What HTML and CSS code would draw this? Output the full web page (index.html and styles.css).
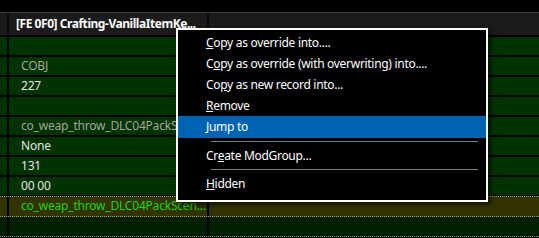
FILE: index.html
```html
<!DOCTYPE html>
<html lang="en">
  <head>
    <meta charset="UTF-8" />
    <title>Records</title>
    <link rel="stylesheet" href="styles.css">
  </head>
  <body>
    <div class="topbar"></div>
    <div class="grid">
      <div class="row head">
        <div class="c0"></div>
        <div class="c1">[FE 0F0] Crafting-VanillaItemKe...</div>
        <div class="c2"></div>
      </div>
      <div class="row green"><div class="c0"></div><div class="c1"></div><div class="c2"></div></div>
      <div class="row green"><div class="c0"></div><div class="c1 dim">COBJ</div><div class="c2"></div></div>
      <div class="row green"><div class="c0"></div><div class="c1">227</div><div class="c2"></div></div>
      <div class="row green"><div class="c0"></div><div class="c1"></div><div class="c2"></div></div>
      <div class="row green"><div class="c0"></div><div class="c1 dim">co_weap_throw_DLC04PackScen...</div><div class="c2"></div></div>
      <div class="row green"><div class="c0"></div><div class="c1">None</div><div class="c2"></div></div>
      <div class="row green"><div class="c0"></div><div class="c1">131</div><div class="c2"></div></div>
      <div class="row green"><div class="c0"></div><div class="c1">00 00</div><div class="c2"></div></div>
      <div class="row olive"><div class="c0"></div><div class="c1 lime">co_weap_throw_DLC04PackScen...</div><div class="c2"></div></div>
      <div class="row dark"><div class="c0"></div><div class="c1"></div><div class="c2"></div></div>
    </div>

    <div class="menu">
      <div class="item"><u>C</u>opy as override into....</div>
      <div class="item">C<u>o</u>py as override (with overwriting) into....</div>
      <div class="item">Co<u>p</u>y as new record into...</div>
      <div class="item"><u>R</u>emove</div>
      <div class="item active"><u>J</u>ump to</div>
      <div class="sep"></div>
      <div class="item">Cr<u>e</u>ate ModGroup...</div>
      <div class="sep"></div>
      <div class="item"><u>H</u>idden</div>
    </div>
  </body>
</html>
```

FILE: styles.css
```css
body {
  margin: 0;
  background-color: #000;
  font-family: "Noto Sans", "Open Sans", sans-serif;
  font-size: 12px;
  color: #e6e6e6;
  overflow: hidden;
  height: 238px;
}

.topbar {
  height: 12px;
  background-color: #000;
  border-bottom: 1px solid #3a3a3a;
}

.row {
  display: flex;
  height: 18px;
  border-bottom: 2px solid #000;
  line-height: 18px;
  letter-spacing: -0.2px;
}

.c0 {
  width: 7px;
  border-right: 2px solid #000;
}

.c1 {
  width: 186px;
  padding-left: 12px;
  border-right: 2px solid #000;
  white-space: nowrap;
}

.c2 {
  flex: 1;
}

.head {
  height: 22px;
  line-height: 22px;
  background-color: #1b1b1b;
  font-weight: bold;
  color: #fff;
  letter-spacing: -0.45px;
}

.head .c0,
.head .c1 {
  border-right-color: #0c0c0c;
}

.head .c1 {
  padding-left: 7px;
  width: 191px;
}

.green {
  background-color: #003300;
}

.dim {
  color: #a3a89a;
}

.olive {
  background-color: #333300;
  border-top: 1px dotted #9a9a9a;
  border-bottom: 1px dotted #9a9a9a;
  height: 19px;
  margin-top: -1px;
}

.lime {
  color: #19d419;
}

.dark {
  background-color: #002100;
  border-bottom: 1px dotted #9a9a9a;
  height: 19px;
}

/* context menu floats over the grid */
.menu {
  position: absolute;
  left: 176px;
  top: 28px;
  width: 308px;
  padding: 2px 0 6px 0;
  background-color: #000;
  border: 2px solid #fff;
  box-shadow: 3px 3px 4px rgba(0, 0, 0, 0.6);
  letter-spacing: -0.3px;
}

.item {
  height: 21px;
  line-height: 21px;
  padding-left: 28px;
  color: #fff;
  white-space: nowrap;
}

.item.active {
  background-color: #0063b1;
  height: 22px;
  line-height: 22px;
}

.sep {
  height: 1px;
  margin: 3px 8px 3px 33px;
  background-color: #808080;
}
```
